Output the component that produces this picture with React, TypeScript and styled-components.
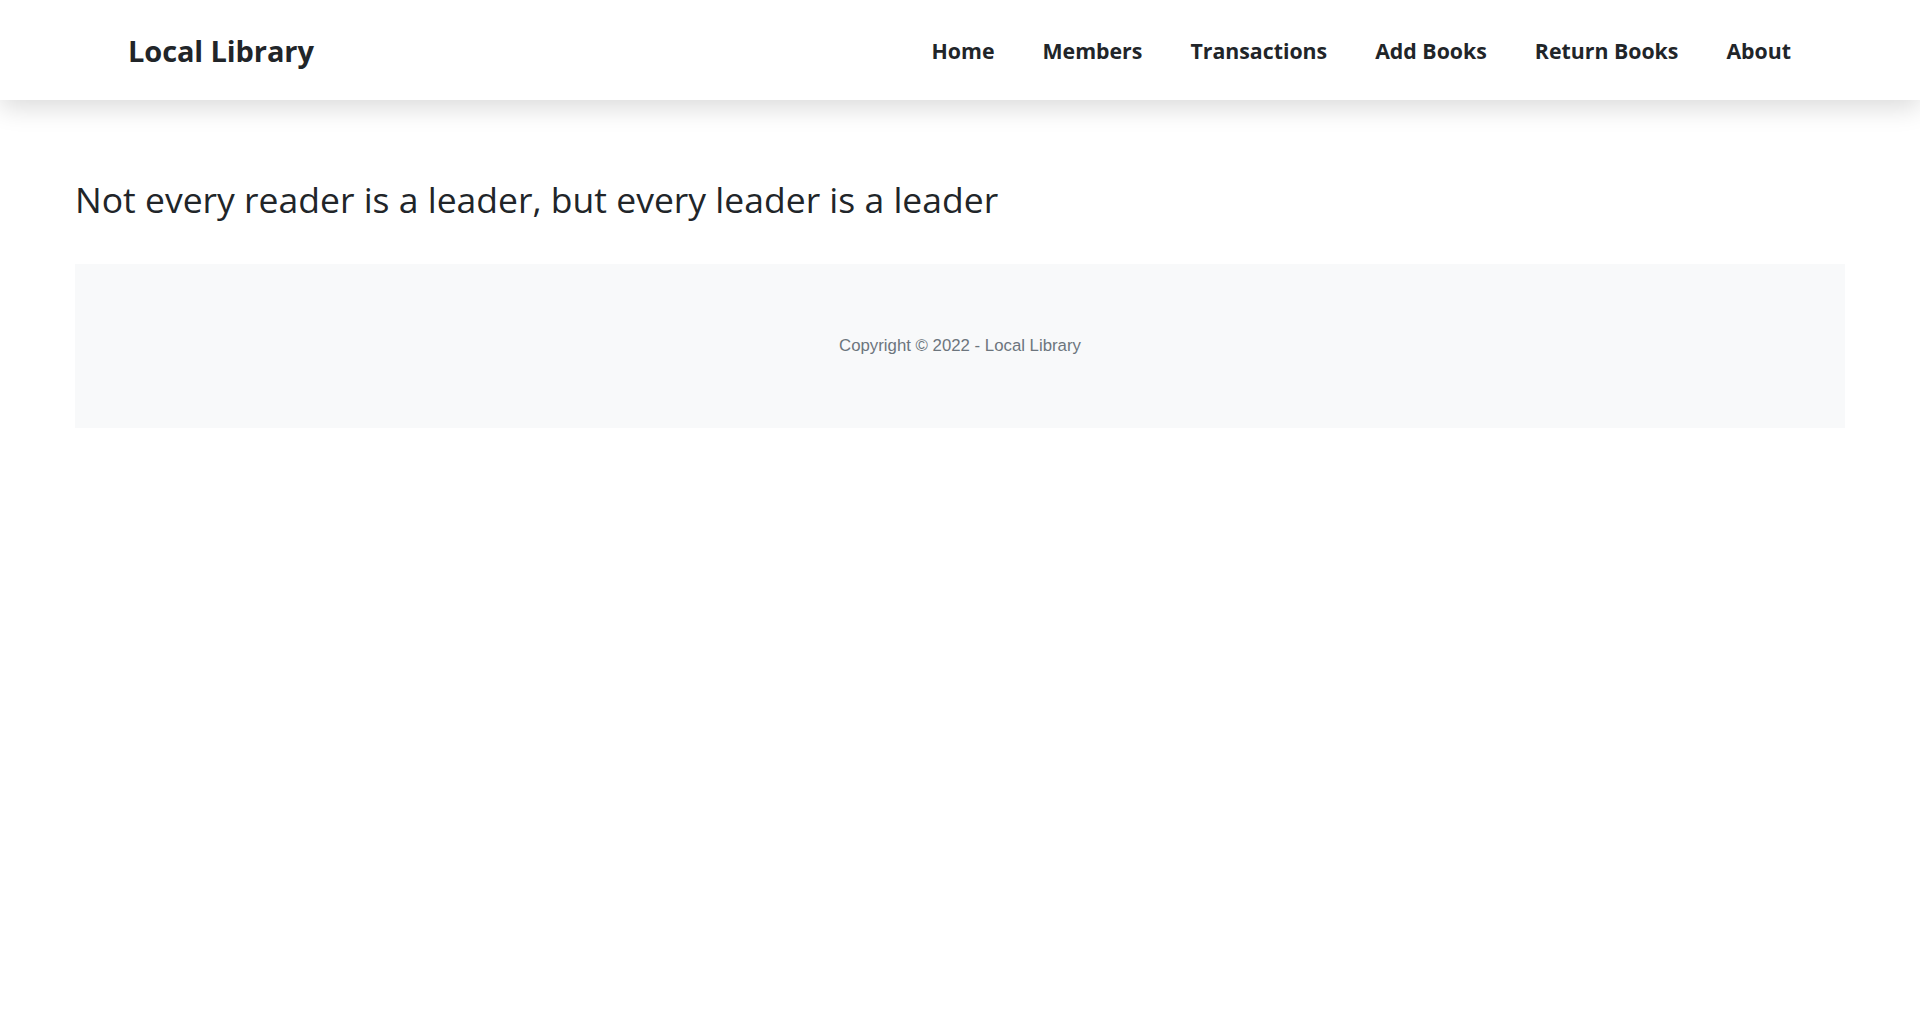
import React from "react";
import styled, { createGlobalStyle } from "styled-components";

const GlobalStyle = createGlobalStyle`
  html, body {
    margin: 0;
    padding: 0;
    background: #ffffff;
  }
  body {
    font-family: "Open Sans", "Noto Sans", sans-serif;
    color: #212529;
  }
  * { box-sizing: border-box; }
`;

const Header = styled.header`
  height: 100px;
  background: #ffffff;
  display: flex;
  align-items: center;
  justify-content: space-between;
  padding: 0 129px 0 128px;
  box-shadow: 0 8px 24px rgba(0, 0, 0, 0.14);
  position: relative;
  z-index: 1;
`;

const Brand = styled.a`
  font-family: "Open Sans", "Noto Sans", sans-serif;
  font-weight: 700;
  font-size: 29px;
  color: #212529;
  text-decoration: none;
  letter-spacing: -0.1px;
`;

const Nav = styled.nav`
  display: flex;
  align-items: center;
  gap: 48px;
`;

const NavLink = styled.a`
  font-family: "Open Sans", "Noto Sans", sans-serif;
  font-weight: 700;
  font-size: 21.3px;
  color: #212529;
  text-decoration: none;
`;

const Main = styled.main`
  padding: 0 75px;
`;

const Heading = styled.h2`
  margin: 78px 0 0;
  font-family: "Open Sans", "Noto Sans", sans-serif;
  font-weight: 400;
  font-size: 35.5px;
  line-height: 1.2;
  color: #212529;
`;

const Footer = styled.footer`
  margin-top: 43px;
  height: 164px;
  background: #f8f9fa;
  display: flex;
  align-items: center;
  justify-content: center;
`;

const Copyright = styled.p`
  margin: 0;
  font-family: "Liberation Sans", Arial, sans-serif;
  font-size: 16.8px;
  color: #6c757d;
`;

const links = ["Home", "Members", "Transactions", "Add Books", "Return Books", "About"];

export default function App() {
  return (
    <>
      <GlobalStyle />
      <Header>
        <Brand href="#">Local Library</Brand>
        <Nav>
          {links.map((l) => (
            <NavLink key={l} href="#">
              {l}
            </NavLink>
          ))}
        </Nav>
      </Header>
      <Main>
        <Heading>Not every reader is a leader, but every leader is a leader</Heading>
        <Footer>
          <Copyright>Copyright © 2022 - Local Library</Copyright>
        </Footer>
      </Main>
    </>
  );
}
